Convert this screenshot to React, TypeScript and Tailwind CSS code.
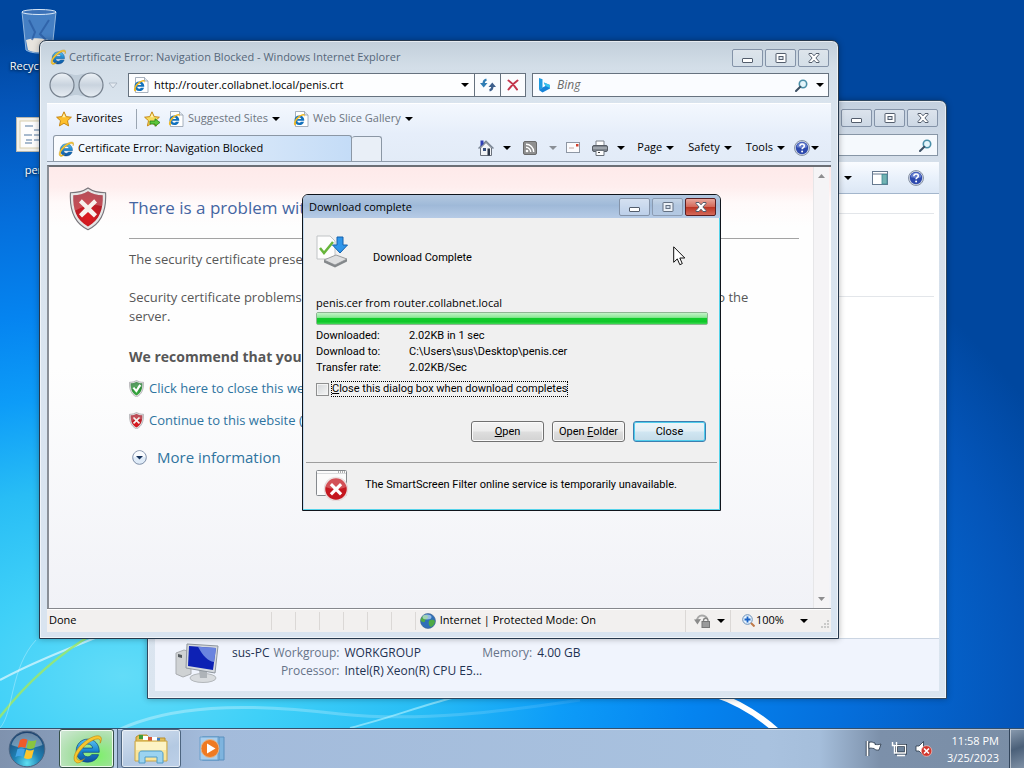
import React from 'react';

const UI = "font-['Open_Sans','Noto_Sans',sans-serif]";

function Caret({dim = false}: {dim?: boolean}) {
  return (
    <svg className={`shrink-0 ${dim ? 'text-[#8a8f96]' : 'text-black'}`} width="8" height="4" viewBox="0 0 8 4">
      <path d="M0 0h8L4 4z" fill="currentColor" />
    </svg>
  );
}

// The blue "e" with its golden orbit
function IeIcon({size = 16}: {size?: number}) {
  return (
    <svg className="shrink-0" width={size} height={size} viewBox="0 0 32 32">
      <defs>
        <linearGradient id="ieBlue" x1="0" y1="0" x2="0" y2="1">
          <stop offset="0" stopColor="#5cc4f2" />
          <stop offset=".5" stopColor="#1b86d0" />
          <stop offset="1" stopColor="#0c4f9c" />
        </linearGradient>
      </defs>
      <path
        d="M29 19.500H11.500c.3 3 2.300 4.800 5.200 4.800 2 0 3.400-.8 4.200-2.300h7.400c-1.600 5-6 8-11.700 8C9.500 30 4.500 24.900 4.500 18S9.500 5.500 16.700 5.500C24 5.500 29.500 11 29 19.500zM22 15c-.4-2.700-2.400-4.300-5.200-4.300-2.700 0-4.700 1.600-5.200 4.300z"
        fill="url(#ieBlue)"
        stroke="#0d4a86"
        strokeWidth=".8"
      />
      <path
        d="M4.500 30.500C-1 27 4 16 12 9.500 19 3.500 27.500 0 30.500 3c1.500 1.600.8 4.300-.5 6.800.4-2.700 0-4.200-1.800-4.500-3.600-.6-10 3-15.200 8C6 20 2.500 27 7.500 28c2 .4 4-.4 6-1.700-3.500 3.700-7 5.400-9 4.200z"
        fill="#f8c62e"
        stroke="#b5800e"
        strokeWidth=".6"
      />
    </svg>
  );
}

function IePageIcon() {
  return (
    <svg className="shrink-0" width="16" height="16" viewBox="0 0 32 32">
      <path d="M5 1h18l7 7v23H5z" fill="#fff" stroke="#8b98a8" strokeWidth="1.500" />
      <path d="M23 1v7h7" fill="#dfe6ee" stroke="#8b98a8" strokeWidth="1.500" />
      <path d="M22.500 19.500H8.500c.3 2.500 1.800 3.800 4 3.800 1.500 0 2.600-.6 3.200-1.800H22c-1.300 4.500-4.600 6.700-9.200 6.700-5.800 0-9.800-3.900-9.800-9.500s4-9.500 9.800-9.500 10.200 4 9.700 10.300zM16.500 16c-.3-2-1.800-3.200-4-3.200s-3.700 1.200-4 3.200z" fill="#1271bd" />
      <path d="M3.500 29C-1 26 4 16 9 12s12-7.500 14-5c1 1.200.5 3-.4 4.600 0-2-.6-2.800-2-2.800-2.600 0-6.600 2.600-10 6-4.700 4.700-7 10-3.600 10.700-1.200 1.700-2.500 3.500-3.500 3.500z" fill="#f1b925" />
    </svg>
  );
}

function StarIcon({add = false}: {add?: boolean}) {
  return (
    <svg className="shrink-0" width="16" height="16" viewBox="0 0 16 16">
      <path d="M8 .8l2.200 4.800 5.200.6-3.900 3.500 1.100 5.200L8 12.300l-4.600 2.600 1.100-5.200L.6 6.200l5.200-.6z" fill={add ? '#f6dc5c' : '#fdc02c'} stroke="#c27f0a" strokeWidth=".9" />
      <path d="M8 2.500l1.600 3.800H6.200z" fill="#fff2b0" />
      {add && <path d="M6 10h5V7.800l5 3.700-5 3.800V13H6z" fill="#5cc63a" stroke="#24801a" strokeWidth=".8" />}
    </svg>
  );
}

function HelpIcon() {
  return (
    <svg className="shrink-0" width="16" height="16" viewBox="0 0 16 16">
      <circle cx="8" cy="8" r="7.500" fill="#d3dae6" stroke="#717d92" strokeWidth=".8" />
      <circle cx="8" cy="8" r="6.200" fill="#2d49ad" />
      <path d="M2.600 7a5.500 5.500 0 0 1 10.800 0c-3 1.600-7.800 1.600-10.800 0z" fill="#7f96dc" opacity=".7" />
      <path d="M5.800 6.200C5.900 4.800 6.800 4 8.100 4s2.200.8 2.200 2c0 1.600-2.200 1.600-2.200 3.300" fill="none" stroke="#fff" strokeWidth="1.500" />
      <circle cx="8.100" cy="11.400" r="1" fill="#fff" />
    </svg>
  );
}

function SearchIcon() {
  return (
    <svg width="13" height="13" viewBox="0 0 13 13">
      <circle cx="8" cy="5" r="3.700" fill="#e4f5fb" stroke="#4a8fa8" strokeWidth="1.600" />
      <path d="M5.300 7.700L1 12" stroke="#3c5064" strokeWidth="2" strokeLinecap="round" />
    </svg>
  );
}

function Shield({size, kind}: {size: number; kind: 'ok' | 'bad'}) {
  const red = kind === 'bad';
  return (
    <svg className="shrink-0" width={size} height={(size * 46) / 40} viewBox="0 0 40 46">
      <defs>
        <radialGradient id={red ? 'shRed' : 'shGreen'} cx=".5" cy=".75" r=".8">
          <stop offset="0" stopColor={red ? '#e01a1e' : '#3cb043'} />
          <stop offset="1" stopColor={red ? '#9a1d2c' : '#1d6e2a'} />
        </radialGradient>
      </defs>
      <path d="M20 1c5 3.500 11 5 18.500 5C39.500 24 35 38 20 45 5 38 .5 24 1.500 6 9 6 15 4.500 20 1z" fill="#e6e6e6" stroke="#77747a" strokeWidth="1.200" />
      <path d="M20 4.500c4.500 2.800 9.500 4 15.500 4.200C36 23 32.500 35 20 41.500 7.500 35 4 23 4.500 8.700 10.500 8.500 15.500 7.300 20 4.500z" fill={`url(#${red ? 'shRed' : 'shGreen'})`} />
      <path d="M20 4.500c4.500 2.800 9.500 4 15.500 4.200.2 4-.1 8-1 11.500-9-3-19-1-28.500 5C4.700 20 4.300 14 4.500 8.700 10.500 8.500 15.500 7.300 20 4.500z" fill="#fff" opacity=".22" />
      {red ? (
        <path d="M13.500 13l6.500 6.300 6.500-6.300 3 3.300-6.300 6.200 6.300 6.200-3.200 3.500-6.300-6-6.300 6-3.200-3.500 6.200-6.200-6.200-6.200z" fill="#f7f2ee" />
      ) : (
        <path d="M9.500 22l4.500-3.500 5 6 8.500-13 5 3L20 34z" fill="#fff" />
      )}
    </svg>
  );
}

type CaptionProps = {close?: 'glass' | 'red'};

function CaptionButtons({close = 'glass'}: CaptionProps) {
  const glass = 'flex h-[18px] w-[31px] items-center justify-center rounded-[2px] border border-[#8493a8] bg-gradient-to-b from-white/40 to-white/5';
  const tint = close === 'red' ? 'border-[#6b86b4] bg-[#b9cde8]' : '';
  return (
    <div className="flex shrink-0 gap-[2px]">
      <button aria-label="Minimize" className={`${glass} ${tint}`}>
        <svg width="13" height="11" viewBox="0 0 13 11">
          <rect x="1.500" y="5.500" width="10" height="4" rx=".5" fill="#fff" stroke="#535d6c" />
        </svg>
      </button>
      <button aria-label="Maximize" className={`${glass} ${close === 'red' ? 'opacity-80' : ''}`}>
        <svg width="12" height="10" viewBox="0 0 12 10">
          <rect x="1" y=".5" width="10" height="9" rx=".5" fill="#fff" stroke="#535d6c" />
          <rect x="4" y="3.500" width="4" height="3" fill="#dde5ee" stroke="#535d6c" />
        </svg>
      </button>
      <button
        aria-label="Close"
        className={
          close === 'red'
            ? 'flex h-[18px] w-[31px] items-center justify-center rounded-[2px] border border-[#5b1f22] bg-linear-[180deg,#e8a79c_0%,#d4695a_48%,#bb3524_52%,#d4695a_100%]'
            : glass
        }
      >
        <svg width="12" height="10" viewBox="0 0 12 10">
          <path d="M1 .5h3l2 2.300L8 .5h3v1L7.900 5 11 8.500v1H8L6 7.200 4 9.500H1v-1L4.100 5 1 1.500z" fill="#fff" stroke="#535d6c" />
        </svg>
      </button>
    </div>
  );
}

function Wallpaper() {
  return (
    <svg className="absolute inset-0 h-full w-full" viewBox="0 0 1024 768" preserveAspectRatio="none">
      <defs>
        <linearGradient id="beam" x1="0" y1="0" x2="1" y2="0">
          <stop offset="0" stopColor="#fff" stopOpacity=".7" />
          <stop offset="1" stopColor="#fff" stopOpacity=".15" />
        </linearGradient>
      </defs>
      <path d="M0 680C30 664 60 652 100 636" fill="none" stroke="#fff" strokeWidth="2" opacity=".6" />
      <path d="M-4 722C20 690 52 658 96 632" fill="none" stroke="#9be86a" strokeWidth="2.500" opacity=".85" />
      <path d="M0 728C14 712 10 668 36 640" fill="none" stroke="#fff" strokeWidth="1" opacity=".3" />
      <path d="M118 730C170 706 240 702 340 714C420 722 500 712 580 700" fill="none" stroke="url(#beam)" strokeWidth="3" opacity=".5" />
      <path d="M350 728C390 718 420 706 452 698" fill="none" stroke="#b8f3ff" strokeWidth="2" opacity=".6" />
      <path d="M714 694C738 702 758 714 778 732" fill="none" stroke="#fff" strokeWidth="6" />
    </svg>
  );
}

function DesktopIcons() {
  const label = 'text-center text-[11px] leading-4 whitespace-nowrap text-white text-shadow-[0_1px_3px_rgb(0_0_0/0.9)]';
  return (
    <div className="absolute top-2 left-0 flex w-[77px] flex-col gap-9">
      <div className="flex flex-col items-center">
        <svg width="40" height="50" viewBox="0 0 40 50">
          <path d="M3 4l4 38c5 4 21 4 26 0l4-38z" fill="#5d92d0" opacity=".75" stroke="#c3dcf3" />
          <path d="M7 32l2 10c5 3 17 3 23 0l1-9c-8-3-18-4-26-1z" fill="#e8e4de" />
          <path d="M10 12l6 12-3 8M30 12l-9 14 6 6" stroke="#2858a0" strokeWidth="2" fill="none" opacity=".7" />
          <ellipse cx="20" cy="4" rx="17" ry="2.500" fill="#3c72b8" stroke="#dceaf8" />
        </svg>
        <span className={label}>Recycle Bin</span>
      </div>
      <div className="flex flex-col items-center gap-2 pt-1">
        <svg width="46" height="40" viewBox="0 0 46 40">
          <rect x=".5" y="3.500" width="45" height="34" fill="#f3f1ea" stroke="#b9b8ae" />
          <rect x="4" y="7" width="38" height="27" fill="#fdfdfd" stroke="#d9cfae" />
          <path d="M9 12h8M18 16h18M8 21h8M18 21h10M10 26h6M18 26h12M9 29h7" stroke="#8ba4bf" strokeWidth="1.500" />
        </svg>
        <span className={label}>penis</span>
      </div>
    </div>
  );
}

function ExplorerWindow() {
  return (
    <section className="absolute top-[100px] right-[77px] bottom-[69px] left-[147px] flex flex-col rounded-t-[7px] border border-[#2e4760] bg-linear-[180deg,#c3d0df_0px,#d5dfea_60px,#dbe5f0_100%] px-[7px] pb-[7px] shadow-[inset_0_0_0_1px_rgb(255_255_255/0.6),0_0_6px_rgb(0_0_0/0.3)]">
      <div className="flex h-[33px] items-start justify-end pt-2 pr-px">
        <CaptionButtons />
      </div>
      <div className="mr-px flex h-[22px] items-center justify-end border border-[#8796a6] bg-[#f5f9fd] pr-[5px]">
        <SearchIcon />
      </div>
      <div className="mt-[6px] flex h-8 items-center justify-end gap-5 border-b border-[#a3b6cc] bg-linear-[180deg,#fafcff_0%,#e9f1fb_50%,#dce7f5_100%] pr-[15px]">
        <Caret />
        <button aria-label="Preview pane">
          <svg width="16" height="14" viewBox="0 0 16 14">
            <rect x=".5" y=".5" width="15" height="13" fill="#fff" stroke="#66798f" />
            <path d="M0 3h16" stroke="#66798f" />
            <rect x="10" y="3.500" width="5" height="9.500" fill="#72b3b3" stroke="#3f8b93" strokeWidth=".8" />
          </svg>
        </button>
        <button aria-label="Help">
          <HelpIcon />
        </button>
      </div>
      <div className="flex-1 bg-white pr-[5px]">
        <div className="h-5 border-b border-[#e3e6ea]" />
        <div className="h-[83px] border-b border-[#e3e6ea]" />
      </div>
      <footer className="flex h-[53px] items-start border-t border-[#cbd5e2] bg-[#f0f4fd] pl-5 text-xs leading-[18px] text-[#1f3252]">
        <svg className="mt-1 shrink-0" width="44" height="42" viewBox="0 0 44 42">
          <path d="M1 10l8-3 7 2v22l-8 3-7-3z" fill="#cfd2d4" stroke="#a9acb0" />
          <path d="M3 11l4 1v3l-4-1z" fill="#53595e" />
          <ellipse cx="28" cy="35" rx="13" ry="4.500" fill="#d8dbde" stroke="#b3b7bb" />
          <path d="M24 27l8 1v7h-7z" fill="#aeb3b8" />
          <path d="M12 1l31 2-3 27-29-5z" fill="#d5d9dd" stroke="#8f969e" />
          <path d="M14 3l27 2-3 22-25-4z" fill="#0d21b4" />
          <path d="M23 3.700l18 1.300-2 14c-6-1-11-6-16-15.300z" fill="#8aa6ee" opacity=".75" />
        </svg>
        <span className="mt-[5px] ml-[13px]">sus-PC</span>
        <dl className="mt-[5px] ml-1 grid grid-cols-[66px_1fr] gap-x-[5px] whitespace-nowrap">
          <dt className="text-right text-[#667388]">Workgroup:</dt>
          <dd>WORKGROUP</dd>
          <dt className="text-right text-[#667388]">Processor:</dt>
          <dd>Intel(R) Xeon(R) CPU E5...</dd>
        </dl>
        <dl className="mt-[5px] flex gap-[5px] whitespace-nowrap">
          <dt className="text-[#667388]">Memory:</dt>
          <dd>4.00 GB</dd>
        </dl>
      </footer>
    </section>
  );
}

function AddressRow() {
  return (
    <div className="mr-[2px] mb-[6px] flex h-6 items-stretch">
      <svg className="-my-1 shrink-0" width="81" height="32" viewBox="0 0 81 32">
        <defs>
          <linearGradient id="orb" x1="0" y1="0" x2="0" y2="1">
            <stop offset="0" stopColor="#eef3f7" />
            <stop offset=".5" stopColor="#c9d3de" />
            <stop offset="1" stopColor="#e8eef4" />
          </linearGradient>
        </defs>
        <path d="M15 4c8 0 10 2 14 2s8-2 15-2v24c-8 0-11-2-15-2s-6 2-14 2z" fill="#b7c4d2" opacity=".7" />
        <circle cx="15" cy="16" r="12" fill="url(#orb)" stroke="#76818e" strokeWidth="1.200" />
        <circle cx="44" cy="16" r="12" fill="url(#orb)" stroke="#76818e" strokeWidth="1.200" />
        <path d="M62 14h8l-4 5z" fill="#e4ebf2" stroke="#a7b3c0" strokeWidth=".8" />
      </svg>
      <div className="flex flex-[341] items-center border border-[#66727f] bg-[#fdfeff] pl-1">
        <IePageIcon />
        <input aria-label="Address" className="min-w-0 flex-1 bg-transparent pl-[5px] text-[11px] text-black outline-none" defaultValue="http://router.collabnet.local/penis.crt" />
        <button aria-label="Show addresses" className="px-[5px]">
          <Caret />
        </button>
      </div>
      <button aria-label="Refresh" className="flex w-[25px] items-center justify-center border-y border-[#66727f] bg-[#fafcfe]">
        <svg width="16" height="14" viewBox="0 0 16 14">
          <path d="M6.500 1.500C4.500 2 3.500 3 3.500 6" fill="none" stroke="#2f7db4" strokeWidth="2.200" />
          <path d="M0 5h7.500L3.700 9.500z" fill="#2f7db4" />
          <path d="M9.500 12.500c2-.5 3-1.500 3-4.500" fill="none" stroke="#3d5f8c" strokeWidth="2.200" />
          <path d="M8.500 9H16l-3.700-4.500z" fill="#3d5f8c" />
        </svg>
      </button>
      <button aria-label="Stop" className="flex w-[26px] items-center justify-center border border-[#66727f] bg-[#fafcfe]">
        <svg width="12" height="12" viewBox="0 0 12 12">
          <path d="M1.500 1.500c3 2 6 5 8.500 9M10.500 1.500C7 4 4 7 1.500 10.500" stroke="#c3344b" strokeWidth="2" fill="none" strokeLinecap="round" />
        </svg>
      </button>
      <div className="ml-[6px] flex flex-[286] items-center border border-[#66727f] bg-[#fafcff] pr-1 pl-[5px]">
        <svg className="shrink-0" width="13" height="16" viewBox="0 0 13 16">
          <path d="M1 1l3.500 1.200v8.600L1 13z" fill="#1f9be0" />
          <path d="M1 13l3.500-2.500 3-1.500-1.700-3.500L12 8v3.500L4.500 15.500z" fill="#1683d8" />
          <path d="M5.800 5.500L12 8v3L7.500 9z" fill="#38c4ee" />
        </svg>
        <input aria-label="Search" placeholder="Bing" className="min-w-0 flex-1 bg-transparent pl-[6px] text-xs text-black outline-none placeholder:text-[#6a6a6a] placeholder:italic" />
        <button aria-label="Search" className="pr-2">
          <SearchIcon />
        </button>
        <button aria-label="Search options">
          <Caret />
        </button>
      </div>
    </div>
  );
}

function FavoritesBar() {
  return (
    <div className="flex h-[31px] items-center pl-[9px] text-[11px] whitespace-nowrap">
      <button className="flex w-20 items-center gap-1 text-black">
        <StarIcon />
        Favorites
      </button>
      <div className="mr-[7px] h-5 w-px bg-[#9aa5b2]" />
      <button aria-label="Add to Favorites Bar">
        <StarIcon add />
      </button>
      <button className="ml-2 flex w-[114px] items-center gap-1 text-[#6d7580]">
        <IePageIcon />
        Suggested Sites
        <Caret />
      </button>
      <button className="ml-[11px] flex items-center gap-1 text-[#6d7580]">
        <IePageIcon />
        Web Slice Gallery
        <Caret />
      </button>
    </div>
  );
}

const menus = ['Page', 'Safety', 'Tools'];

function TabRow() {
  return (
    <div className="flex h-[31px] flex-col">
      <div className="flex h-7 items-end border-b border-[#8f9baa] pl-[6px] text-[11px]">
        <div className="flex h-[26px] flex-[293] items-center gap-1 rounded-t-[3px] border border-b-0 border-[#8b97a5] bg-linear-[90deg,#fafcfe_0%,#d9e8f9_60%,#c4dcf7_100%] pl-1 whitespace-nowrap text-black">
          <IeIcon />
          Certificate Error: Navigation Blocked
        </div>
        <button aria-label="New tab" className="h-[25px] w-[30px] rounded-t-[3px] border border-b-0 border-l-0 border-[#8b97a5] bg-[#e9eff7]" />
        <div className="flex h-full flex-[437] items-center justify-end pr-3">
          <button aria-label="Home" className="flex items-center gap-[9px]">
            <svg width="16" height="16" viewBox="0 0 16 16">
              <path d="M2.500 8L8 2.500 13.500 8v7.500h-11z" fill="#f1f3f6" stroke="#6a717c" />
              <path d="M.5 8.500L8 1.200l7.500 7.300" fill="none" stroke="#7a8594" strokeWidth="1.500" />
              <path d="M2.500 .5h3v3.500l-3 2.500z" fill="#2f3fb4" />
              <rect x="5" y="8" width="3" height="3" fill="#39507c" />
              <rect x="9.500" y="8.500" width="2.500" height="7" fill="#2b3445" />
            </svg>
            <Caret />
          </button>
          <button aria-label="Feeds" className="ml-3 flex items-center gap-3">
            <svg width="14" height="14" viewBox="0 0 14 14">
              <rect x=".5" y=".5" width="13" height="13" rx="1.500" fill="#8f8f8f" stroke="#6a6a6a" />
              <circle cx="4" cy="10" r="1.300" fill="#fff" />
              <path d="M3 6.300a4.700 4.700 0 0 1 4.700 4.700M3 3.300a7.700 7.700 0 0 1 7.700 7.700" fill="none" stroke="#fff" strokeWidth="1.400" />
            </svg>
            <Caret dim />
          </button>
          <button aria-label="Read mail" className="ml-[9px]">
            <svg width="14" height="11" viewBox="0 0 14 11">
              <rect x=".5" y=".5" width="13" height="10" fill="#fbfbfd" stroke="#8e97a4" />
              <rect x="10" y="2" width="2.500" height="2.500" fill="#d2412e" />
              <path d="M3 6h5" stroke="#c3a8a4" />
            </svg>
          </button>
          <button aria-label="Print" className="ml-3 flex items-center gap-[9px]">
            <svg width="16" height="16" viewBox="0 0 16 16">
              <path d="M4 1h8v5H4z" fill="#fff" stroke="#7c828b" />
              <rect x=".5" y="5.500" width="15" height="6" rx="1.500" fill="#7d848d" stroke="#565c65" />
              <path d="M1 8h14" stroke="#c0c5cb" />
              <path d="M4 10.500h8v5H4z" fill="#fff" stroke="#6b727b" />
              <path d="M6 12.500h2" stroke="#444" />
            </svg>
            <Caret />
          </button>
          <div className="ml-3 flex gap-[14px]">
            {menus.map(m => (
              <button key={m} className="flex items-center gap-1 text-black">
                {m}
                <Caret />
              </button>
            ))}
          </div>
          <button aria-label="Help" className="ml-[9px] flex items-center gap-px">
            <HelpIcon />
            <Caret />
          </button>
        </div>
      </div>
    </div>
  );
}

function ErrorPage() {
  return (
    <div className="flex min-h-0 flex-1 border-t-2 border-l-2 border-t-[#6c6f75] border-l-[#8a8f97] bg-linear-[180deg,#feeaea_0px,#feeeee_20px,#fffafa_36px,#fefefe_60px,#fefefe_200px,#f1f2f7_100%]">
      <main className="flex min-w-0 flex-1 gap-[22px] overflow-hidden pt-5 pr-[14px] pl-5 text-[13px] leading-[19px] text-[#575757]">
        <div className="shrink-0">
          <Shield size={38} kind="bad" />
        </div>
        <div className="min-w-0 flex-1">
          <h1 className="border-b border-[#a3a3a3] pb-[10px] text-[17px] leading-[41px] whitespace-nowrap text-[#4465a2]">
            There is a problem with this website's security certificate.
          </h1>
          <p className="mt-[11px] whitespace-nowrap">The security certificate presented by this website was not issued by a trusted authority.</p>
          <p className="mt-[19px] pr-10">Security certificate problems may indicate an attempt to fool you or intercept any data you send to the server.</p>
          <p className="mt-[21px] text-sm leading-[19px] font-bold">We recommend that you close this webpage and do not continue.</p>
          <a href="#close" className="mt-[13px] flex items-center gap-[5px] text-[#2f74a0]">
            <Shield size={15} kind="ok" />
            Click here to close this webpage.
          </a>
          <a href="#continue" className="mt-[13px] flex items-center gap-[5px] text-[#2f74a0]">
            <Shield size={15} kind="bad" />
            Continue to this website (not recommended).
          </a>
          <a href="#more" className="mt-4 flex items-center gap-[10px] pl-[3px] text-[15px] leading-[22px] text-[#2f74a0]">
            <svg width="15" height="15" viewBox="0 0 15 15">
              <circle cx="7.500" cy="7.500" r="6.800" fill="#dfebf8" stroke="#7d8da6" />
              <path d="M1.500 7a6 6 0 0 1 12 0z" fill="#fff" opacity=".8" />
              <path d="M4 6h7L7.500 9.500z" fill="#16335c" />
            </svg>
            More information
          </a>
        </div>
      </main>
      <div className="mr-[2px] flex w-4 shrink-0 flex-col items-center justify-between border-l border-[#e6e6e8] bg-[#f5f4f6] py-[7px]">
        <svg width="7" height="4" viewBox="0 0 7 4">
          <path d="M0 4h7L3.500 0z" fill="#8d8d8f" />
        </svg>
        <svg width="7" height="4" viewBox="0 0 7 4">
          <path d="M0 0h7L3.500 4z" fill="#8d8d8f" />
        </svg>
      </div>
    </div>
  );
}

function StatusBar() {
  return (
    <footer className="flex h-6 items-center border-t border-[#85878c] bg-[#f2f0ef] text-[11px] text-black shadow-[inset_0_1px_0_#fff]">
      <span className="flex-[224] pl-[2px]">Done</span>
      {[0, 1, 2, 3, 4, 5].map(n => (
        <i key={n} className="h-[18px] w-6 border-l border-[#dbd8d6]" />
      ))}
      <div className="flex h-[18px] flex-[268] items-center gap-1 border-l border-[#dbd8d6] pl-1 whitespace-nowrap">
        <svg width="16" height="16" viewBox="0 0 16 16">
          <circle cx="8" cy="8" r="7.500" fill="#2f6fb8" stroke="#43658c" strokeWidth=".6" />
          <path d="M3 3c3-2 5-1 5 1S5 6 5 8 2 9 1 8s0-3 2-5zM9 8c2-2 5-1 6 0 0 3-2 5-4 6-2-1-3-4-2-6z" fill="#4eaa45" />
          <ellipse cx="7" cy="4" rx="4.500" ry="2.500" fill="#d9efff" opacity=".6" />
        </svg>
        Internet | Protected Mode: On
      </div>
      <button aria-label="Security report" className="flex h-[22px] w-[45px] items-center gap-[6px] border-l border-[#dbd8d6] pl-2">
        <svg width="17" height="14" viewBox="0 0 17 14">
          <path d="M3 7C3 4 5 1.500 8 1.500c2.500 0 4 1 5 3" fill="none" stroke="#a8a8a8" strokeWidth="2" />
          <path d="M0 5.500l3.500 5L7 5z" fill="#8b8b8b" />
          <path d="M9.500 8V6.500a2.200 2.200 0 0 1 4.500 0V8" fill="none" stroke="#858585" strokeWidth="1.300" />
          <rect x="8" y="7.500" width="7.500" height="6" fill="#9a9a9a" stroke="#777" />
        </svg>
        <Caret />
      </button>
      <button aria-label="Zoom level" className="flex h-[22px] w-[101px] items-center border-l border-[#dbd8d6] pl-[11px]">
        <svg width="13" height="13" viewBox="0 0 13 13">
          <circle cx="5.500" cy="5.500" r="4.800" fill="#e5f2fd" stroke="#6c90b8" />
          <path d="M5.500 2.500v6M2.500 5.500h6" stroke="#1b62c4" strokeWidth="1.800" />
          <path d="M9 9l3.500 3.500" stroke="#c07a4a" strokeWidth="2" />
        </svg>
        <span className="w-[45px] pl-px text-left">100%</span>
        <Caret />
        <svg className="mt-2 ml-3" width="9" height="9" viewBox="0 0 9 9">
          <path d="M7 1h2M4 4h2M7 4h2M1 7h2M4 7h2M7 7h2" stroke="#bdbdbd" strokeWidth="1.500" />
        </svg>
      </button>
    </footer>
  );
}

function BrowserWindow() {
  return (
    <section className="absolute top-10 right-[185px] bottom-[129px] left-[39px] flex flex-col rounded-t-[7px] border border-[#26384c] bg-linear-[180deg,#c2cfdb_0px,#d3dee8_26px,#dae4ee_64px,#d9e4f0_100%] px-[7px] pb-[6px] shadow-[inset_0_0_0_1px_rgb(255_255_255/0.6),0_0_6px_rgb(0_0_0/0.3)]">
      <div className="flex h-8 shrink-0 items-start justify-between pr-[2px]">
        <div className="flex h-full items-center gap-[3px] pl-[3px] text-[11px] text-[#56677a]">
          <IeIcon />
          Certificate Error: Navigation Blocked - Windows Internet Explorer
        </div>
        <div className="pt-2">
          <CaptionButtons />
        </div>
      </div>
      <AddressRow />
      <div className="shrink-0 bg-linear-[180deg,#f4f8fe_0%,#e6eefa_50%,#e2ebf7_100%] shadow-[inset_0_1px_0_#fff]">
        <FavoritesBar />
        <TabRow />
      </div>
      <ErrorPage />
      <StatusBar />
    </section>
  );
}

const facts = [
  ['Downloaded:', '2.02KB in 1 sec'],
  ['Download to:', 'C:\\Users\\sus\\Desktop\\penis.cer'],
  ['Transfer rate:', '2.02KB/Sec'],
];

function DownloadDialog() {
  const percent = 100;
  const button = 'h-[21px] w-[73px] rounded-[3px] border bg-linear-[180deg,#f3f3f3_0%,#ececec_48%,#dedede_52%,#d2d2d2_100%] shadow-[inset_0_0_0_1px_#fafafa]';
  return (
    <section role="dialog" aria-label="Download complete" className="absolute top-[194px] left-[302px] w-[419px] rounded-t-[6px] border border-[#10151c] bg-[#f0f0f0] font-['Roboto','Liberation_Sans',sans-serif] text-[11px] leading-4 text-black shadow-[inset_-1px_-1px_0_#56d3ea,inset_1px_0_0_#c6dcf0]">
      <header className={`flex h-[23px] items-start justify-between rounded-t-[5px] bg-linear-[180deg,#b3c8e0_0%,#9fb9d8_45%,#b6cbe6_100%] pt-[3px] pr-1 pl-[6px] text-[11px] leading-[18px] ${UI}`}>
        <h2>Download complete</h2>
        <CaptionButtons close="red" />
      </header>
      <div className="pr-[14px] pb-5 pl-[13px]">
        <div className="flex h-[77px] items-start gap-[25px] pt-4">
          <svg className="shrink-0" width="32" height="34" viewBox="0 0 32 34">
            <path d="M1 2h13l5 5v18H1z" fill="#fdfdfd" stroke="#c1c4c6" />
            <path d="M8 26l12-5 11 4-12 6z" fill="#dedfe0" stroke="#9b9d9f" />
            <path d="M8 26l11 5v2.500l-11-5zM19 31l12-6v2.500l-12 6z" fill="#84888b" />
            <path d="M4 14l4 5 9-11" fill="none" stroke="#67b53b" strokeWidth="2.500" />
            <path d="M21 3h6v8h4.500L24 19l-7.500-8H21z" fill="#2f96ea" stroke="#1461ad" />
          </svg>
          <p className="pt-4">Download Complete</p>
        </div>
        <p className={`leading-4 ${UI}`}>penis.cer from router.collabnet.local</p>
        <div role="progressbar" aria-valuenow={percent} className="mt-px -mr-0.5 h-[13px] rounded-[2px] border border-[#8eb592] bg-[#e6e6e6]">
          <div className="h-full bg-linear-[180deg,#c4f3c9_0%,#8ce896_40%,#12cb2c_50%,#10c82a_80%,#41d956_100%]" style={{width: `${percent}%`}} />
        </div>
        <dl className="mt-[3px] grid grid-cols-[93px_1fr]">
          {facts.map(([k, v]) => (
            <React.Fragment key={k}>
              <dt>{k}</dt>
              <dd>{v}</dd>
            </React.Fragment>
          ))}
        </dl>
        <div className="mt-[5px] flex items-center gap-[2px]">
          <input id="autoclose" type="checkbox" className="h-[13px] w-[13px] appearance-none border border-[#8e8f8f] bg-linear-[135deg,#d2d5d8,#f6f6f6] shadow-[inset_0_0_0_1px_#f4f4f4]" />
          <label htmlFor="autoclose" className="border border-dotted border-black leading-[14px] whitespace-nowrap">
            <u>C</u>lose this dialog box when download completes
          </label>
        </div>
        <div className="mt-6 flex justify-end gap-2">
          <button className={`${button} border-[#707070]`}>
            <u>O</u>pen
          </button>
          <button className={`${button} border-[#707070] whitespace-nowrap`}>
            Open <u>F</u>older
          </button>
          <button className="h-[21px] w-[73px] rounded-[3px] border border-[#3c7fb1] bg-linear-[180deg,#eef5f8_0%,#e2eff6_48%,#d0e6f2_52%,#c4dbe8_100%] shadow-[inset_0_0_0_1px_#50cdec]">Close</button>
        </div>
      </div>
      <footer className="mx-[3px] flex h-12 items-center gap-4 border-t border-[#9d9d9d] pb-[3px] pl-[10px]">
        <svg width="33" height="32" viewBox="0 0 33 32">
          <rect x=".5" y="1.500" width="30" height="25" rx="1" fill="#fbfbfb" stroke="#85898d" />
          <path d="M1 4.500h29" stroke="#d8dadc" />
          <path d="M22 3h7" stroke="#666" strokeDasharray="1 1" />
          <circle cx="20" cy="20" r="11.500" fill="#c5171f" stroke="#e7dada" strokeWidth="1.500" />
          <path d="M9.500 18a10.500 10.500 0 0 1 21 0c-6 2.500-15 2.500-21 0z" fill="#fff" opacity=".25" />
          <path d="M16 14l4 4 4-4 2.200 2.200-4 4 4 4L24 26.500l-4-4-4 4-2.200-2.300 4-4-4-4z" fill="#fff" />
        </svg>
        <p>The SmartScreen Filter online service is temporarily unavailable.</p>
      </footer>
    </section>
  );
}

function Pointer() {
  return (
    <svg className="absolute top-[246px] left-[673px]" width="14" height="21" viewBox="0 0 14 21">
      <path d="M.7.800v15.500l3.600-3.400 2.500 5.800 2.500-1.100-2.500-5.600h5z" fill="#fff" stroke="#111" strokeWidth="1" />
    </svg>
  );
}

function Taskbar() {
  return (
    <nav className="absolute inset-x-0 bottom-0 flex h-10 items-stretch border-t border-[#33506e] bg-linear-[90deg,#7f92ae_0%,#8ba1bf_9%,#a3bbdb_20%,#a9c2df_75%,#a5bedb_80%,#7c90aa_86%,#7a8ea6_100%] shadow-[inset_0_1px_0_rgb(255_255_255/0.45)]">
      <button aria-label="Start" className="ml-2 self-center">
        <svg width="38" height="38" viewBox="0 0 38 38">
          <defs>
            <radialGradient id="start" cx=".5" cy=".9" r=".9">
              <stop offset="0" stopColor="#5fe0f2" />
              <stop offset=".4" stopColor="#1e83b6" />
              <stop offset="1" stopColor="#1f3f6b" />
            </radialGradient>
          </defs>
          <circle cx="19" cy="19" r="17.800" fill="url(#start)" stroke="#4a6482" />
          <path d="M3.500 15a16 16 0 0 1 31 0c-9 4-22 4-31 0z" fill="#fff" opacity=".35" />
          <path d="M12 10c3-2 5-1.500 7.500-.3L17.300 18c-2.500-1.200-5-1.600-7.600 0z" fill="#ee5a2a" />
          <path d="M20.500 10.200c2.600 1.200 5 1.300 8-.2L26.300 18c-2.600 1.300-5 1.500-7.800.3z" fill="#8ac441" />
          <path d="M9.400 19.300c2.500-1.400 5-1.200 7.500 0L14.700 27c-2.500-1.200-4.700-1.400-7.400.2z" fill="#42a4e6" />
          <path d="M18.200 19.600c2.600 1.200 5 1.300 7.800 0L23.700 28c-2.500 1.200-5 1.200-7.700 0z" fill="#fdc52c" />
        </svg>
      </button>
      <button aria-label="Internet Explorer" className="ml-[13px] flex w-[55px] items-center justify-center rounded-[3px] border border-[#365048] bg-radial-[at_70%_70%] from-[#7df06a] via-[#a6dfa4] to-[#d3e8d8] shadow-[inset_0_0_0_1px_rgb(255_255_255/0.8)]">
        <IeIcon size={30} />
      </button>
      <i className="w-1 border-r border-[#4d6580] bg-[#b5cbe4]" />
      <button aria-label="Windows Explorer" className="ml-[3px] flex w-[60px] items-center justify-center rounded-[3px] border border-[#4d6580] bg-linear-[160deg,#d4e0ef_0%,#b4c9e2_60%,#bdd0e8_100%] shadow-[inset_0_0_0_1px_rgb(255_255_255/0.6)]">
        <svg width="34" height="30" viewBox="0 0 34 30">
          <path d="M2 3l3-2h8l2 3h16v5H2z" fill="#e3bf56" stroke="#b98e2e" />
          <path d="M5 1h4v4H5z" fill="#3f9c3a" />
          <path d="M9 2h5v4H9z" fill="#fff" />
          <path d="M14 3h4v4h-4z" fill="#d85434" />
          <path d="M18 3h5v4h-5z" fill="#fff" />
          <path d="M23 4h3v4h-3z" fill="#3f7cc6" />
          <path d="M1 7h32v20H1z" fill="#f9e59a" stroke="#c9a548" />
          <path d="M2 8h30v8H2z" fill="#fdf3c4" />
          <path d="M5 29v-9c0-2 1-3 3-3h18c2 0 3 1 3 3v9h-6v-6H11v6z" fill="#9bd3f0" stroke="#4f9cc8" />
        </svg>
      </button>
      <button aria-label="Media Player" className="ml-[17px]">
        <svg width="28" height="28" viewBox="0 0 28 28">
          <path d="M5 2h21v23H5z" fill="#7eb4de" stroke="#5a90bf" />
          <path d="M4 2h17v23H4z" fill="#9cc9ea" stroke="#5a90bf" />
          <path d="M2 2h18v23H2z" fill="#a9cfee" stroke="#6aa0cc" />
          <circle cx="12" cy="13.500" r="9" fill="#ef7a22" stroke="#e0b48c" />
          <path d="M9 8.500l8.500 5L9 18.500z" fill="#fff" />
        </svg>
      </button>
      <div className="ml-auto flex items-center gap-2">
        <svg width="18" height="17" viewBox="0 0 18 17">
          <path d="M2.500 1v15" stroke="#273648" strokeWidth="3.500" />
          <path d="M2.500 1v15" stroke="#fff" strokeWidth="1.800" />
          <path d="M4 2.500c3-1.500 4 .5 6 .5v1.500c2 0 3 .5 6-.5l-2 6c-3 .5-4-.5-5-1.500-2 0-3-1-5 0z" fill="#fff" stroke="#273648" strokeWidth=".8" />
        </svg>
        <svg width="16" height="16" viewBox="0 0 16 16">
          <path d="M5.500 4.500h9v7.500h-9z" fill="#6d829a" stroke="#273648" strokeWidth="3" />
          <path d="M5.500 4.500h9v7.500h-9zM6 14.500h8M1.500 1v3.500h4V1M3.500 4v8H6" fill="none" stroke="#fff" strokeWidth="1.400" />
        </svg>
        <svg width="18" height="17" viewBox="0 0 18 17">
          <path d="M1 6h3l4.500-4.500v14L4 11H1z" fill="#fff" stroke="#273648" strokeWidth=".8" />
          <circle cx="11.500" cy="11" r="5.300" fill="#d1352b" stroke="#f3c5c0" strokeWidth=".7" />
          <path d="M9 8.500l5 5M14 8.500l-5 5" stroke="#fff" strokeWidth="1.600" />
        </svg>
      </div>
      <time className="flex w-[76px] flex-col items-end justify-center pr-[10px] text-[11px] leading-[17px] text-white">
        <span>11:58 PM</span>
        <span>3/25/2023</span>
      </time>
      <button aria-label="Show desktop" className="w-[15px] border-l border-[#31445a] bg-linear-[160deg,#8b9cb0_0%,#4b6079_50%,#7e90a5_100%] shadow-[inset_1px_1px_0_rgb(255_255_255/0.5)]" />
    </nav>
  );
}

function App() {
  return (
    <div className={`relative min-h-screen overflow-hidden bg-[radial-gradient(ellipse_1000px_640px_at_12%_88%,#62dcf8_0%,#3fd0f8_15%,#28bdf5_30%,#0d9cf8_44%,#0584f0_57%,#056fdc_72%,#0455b9_90%,#00479f_100%)] ${UI}`}>
      <Wallpaper />
      <DesktopIcons />
      <ExplorerWindow />
      <BrowserWindow />
      <DownloadDialog />
      <Pointer />
      <Taskbar />
    </div>
  );
}

export default App;
